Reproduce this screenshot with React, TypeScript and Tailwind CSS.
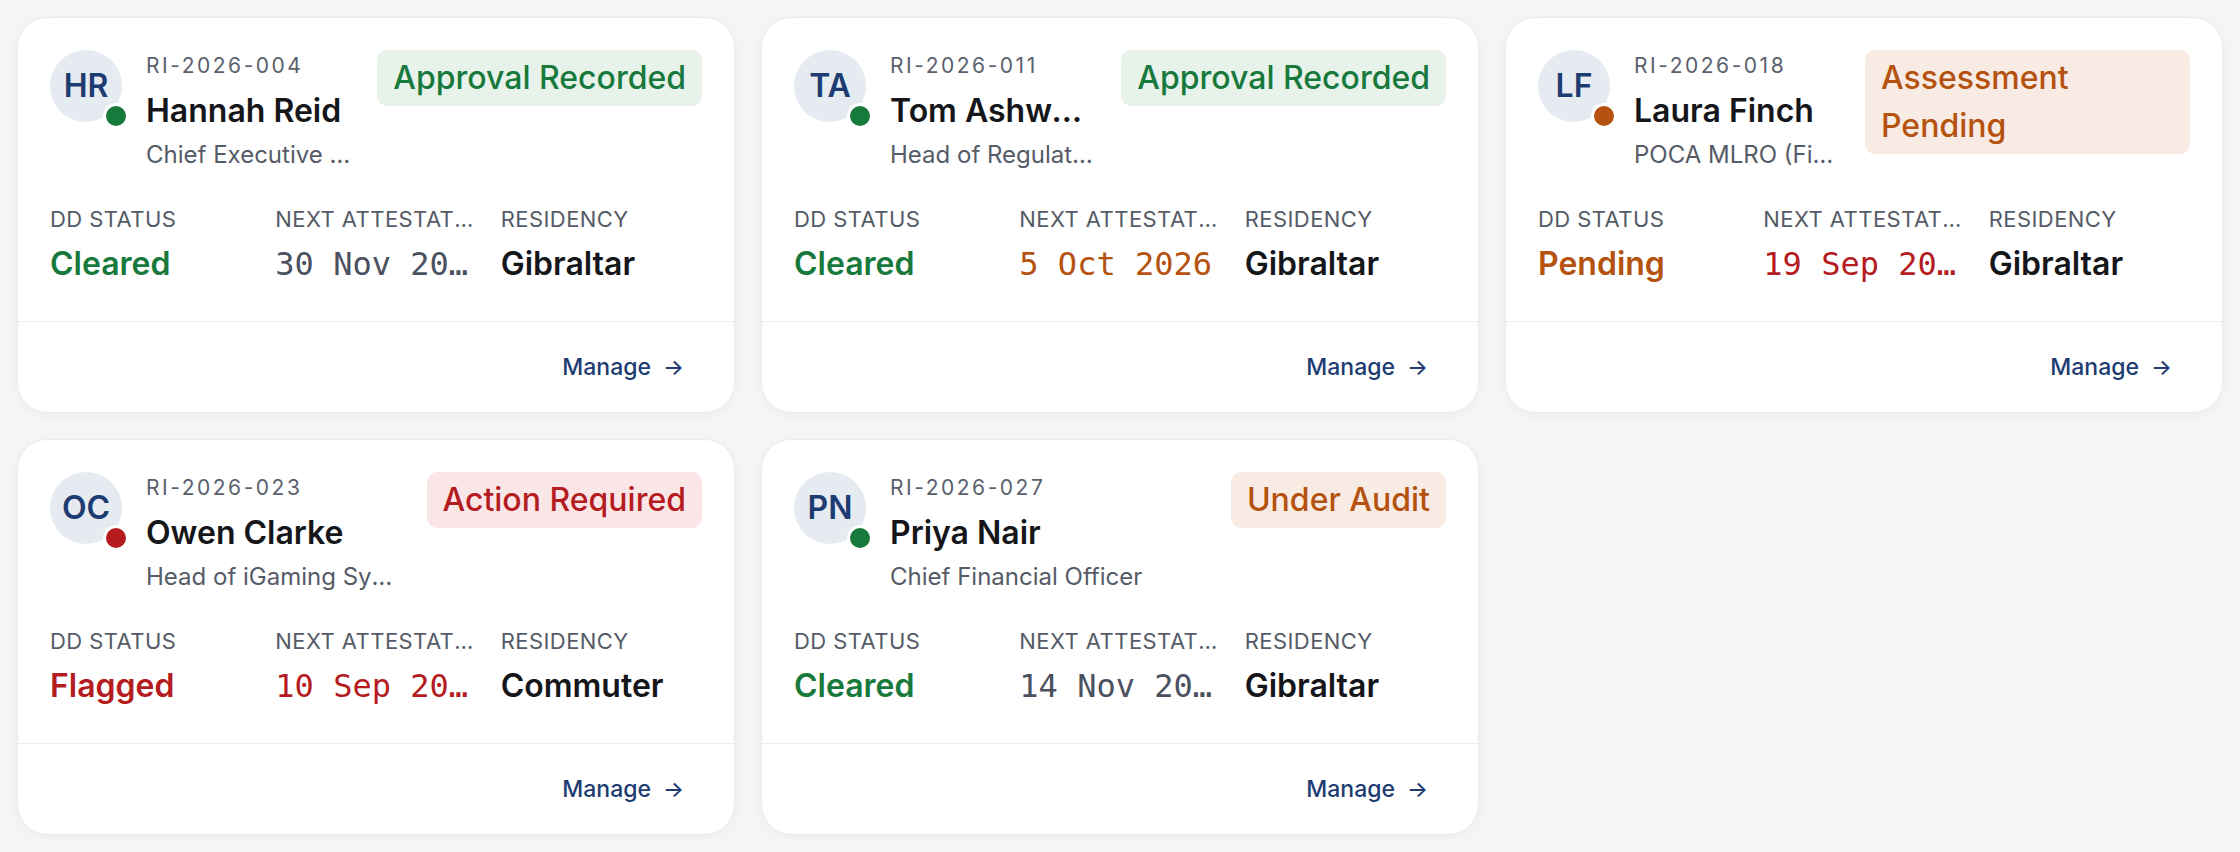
type Tone = "green" | "orange" | "red" | "gray" | "dark";

type Person = {
  initials: string;
  id: string;
  name: string;
  role: string;
  dot: Tone;
  badge: string;
  badgeTone: Tone;
  dd: string;
  ddTone: Tone;
  date: string;
  dateTone: Tone;
  residency: string;
};

const people: Person[] = [
  {
    initials: "HR",
    id: "RI-2026-004",
    name: "Hannah Reid",
    role: "Chief Executive Officer",
    dot: "green",
    badge: "Approval Recorded",
    badgeTone: "green",
    dd: "Cleared",
    ddTone: "green",
    date: "30 Nov 2026",
    dateTone: "gray",
    residency: "Gibraltar",
  },
  {
    initials: "TA",
    id: "RI-2026-011",
    name: "Tom Ashworth",
    role: "Head of Regulatory Compliance",
    dot: "green",
    badge: "Approval Recorded",
    badgeTone: "green",
    dd: "Cleared",
    ddTone: "green",
    date: "5 Oct 2026",
    dateTone: "orange",
    residency: "Gibraltar",
  },
  {
    initials: "LF",
    id: "RI-2026-018",
    name: "Laura Finch",
    role: "POCA MLRO (Financial Crime)",
    dot: "orange",
    badge: "Assessment Pending",
    badgeTone: "orange",
    dd: "Pending",
    ddTone: "orange",
    date: "19 Sep 2026",
    dateTone: "red",
    residency: "Gibraltar",
  },
  {
    initials: "OC",
    id: "RI-2026-023",
    name: "Owen Clarke",
    role: "Head of iGaming Systems",
    dot: "red",
    badge: "Action Required",
    badgeTone: "red",
    dd: "Flagged",
    ddTone: "red",
    date: "10 Sep 2026",
    dateTone: "red",
    residency: "Commuter",
  },
  {
    initials: "PN",
    id: "RI-2026-027",
    name: "Priya Nair",
    role: "Chief Financial Officer",
    dot: "green",
    badge: "Under Audit",
    badgeTone: "orange",
    dd: "Cleared",
    ddTone: "green",
    date: "14 Nov 2026",
    dateTone: "gray",
    residency: "Gibraltar",
  },
];

const textTone: Record<Tone, string> = {
  green: "text-[#177a3c]",
  orange: "text-[#b5520f]",
  red: "text-[#b51c1f]",
  gray: "text-[#4b5160]",
  dark: "text-[#15161a]",
};

const dotTone: Record<Tone, string> = {
  green: "bg-[#177a3c]",
  orange: "bg-[#b5520f]",
  red: "bg-[#b51c1f]",
  gray: "bg-gray-500",
  dark: "bg-gray-900",
};

const badgeTone: Record<Tone, string> = {
  green: "bg-[#e7f2ea] text-[#177a3c]",
  orange: "bg-[#f8ebe4] text-[#b5520f]",
  red: "bg-[#fae6e7] text-[#b51c1f]",
  gray: "bg-gray-100 text-gray-700",
  dark: "bg-gray-100 text-gray-900",
};

function PersonCard({ p }: { p: Person }) {
  return (
    <div className="flex flex-col rounded-[30px] border border-[#e8eaef] bg-white shadow-[0_2px_12px_rgba(20,30,60,0.035)]">
      <div className="px-[32px] pt-[32px] pb-[37px]">
        {/* Header */}
        <div className="flex items-start gap-[24px]">
          <div className="relative h-[72px] w-[72px] shrink-0 rounded-full bg-[#e6ebf1]">
            <div className="flex h-full w-full items-center justify-center text-[32px] font-semibold text-[#1d3c72]">
              {p.initials}
            </div>
            <span
              className={`absolute right-[-7px] bottom-[-7px] h-[26px] w-[26px] rounded-full border-[3px] border-white ${dotTone[p.dot]}`}
            />
          </div>
          <div className="min-w-0 flex-1">
            <div className="truncate text-[21px] leading-[32px] tracking-[0.12em] text-[#5a606c]">{p.id}</div>
            <div className="mt-[9px] truncate text-[32px] leading-[40px] font-semibold text-[#15161a]">
              {p.name}
            </div>
            <div className="mt-[8px] truncate text-[24px] leading-[32px] text-[#555b67]">{p.role}</div>
          </div>
          <div
            className={`max-w-[325px] shrink-0 rounded-[10px] px-[16px] py-[4px] text-[32px] leading-[48px] font-medium ${badgeTone[p.badgeTone]}`}
          >
            {p.badge}
          </div>
        </div>

        {/* Stats */}
        <div className="mt-[34px] grid grid-cols-3 gap-x-[24px]">
          <div className="min-w-0">
            <div className="truncate text-[22px] leading-[28px] tracking-[0.02em] text-[#555b67] uppercase">DD Status</div>
            <div className={`mt-[11px] truncate text-[32px] leading-[40px] font-semibold ${textTone[p.ddTone]}`}>
              {p.dd}
            </div>
          </div>
          <div className="min-w-0">
            <div className="truncate text-[22px] leading-[28px] tracking-[0.02em] text-[#555b67] uppercase">
              Next Attestation
            </div>
            <div
              className={`mt-[11px] truncate font-['DejaVu_Sans_Mono',monospace] text-[32px] leading-[40px] ${textTone[p.dateTone]}`}
            >
              {p.date}
            </div>
          </div>
          <div className="min-w-0">
            <div className="truncate text-[22px] leading-[28px] tracking-[0.02em] text-[#555b67] uppercase">Residency</div>
            <div className="mt-[11px] truncate text-[32px] leading-[40px] font-semibold text-[#15161a]">
              {p.residency}
            </div>
          </div>
        </div>
      </div>

      {/* Footer */}
      <div className="flex h-[91px] items-center justify-end border-t border-[#eceef2] px-[32px]">
        <button className="flex items-center gap-[12px] px-[18px] text-[23px] leading-[30px] font-medium text-[#1d3c72]">
          <span>Manage</span>
          <span className="text-[22px]">→</span>
        </button>
      </div>
    </div>
  );
}

export default function App() {
  return (
    <div className="min-h-screen bg-[#f4f5f7] p-[17px] font-['Inter',sans-serif]">
      <div className="grid grid-cols-3 gap-[26px]">
        {people.map((p) => (
          <PersonCard key={p.id} p={p} />
        ))}
      </div>
    </div>
  );
}
